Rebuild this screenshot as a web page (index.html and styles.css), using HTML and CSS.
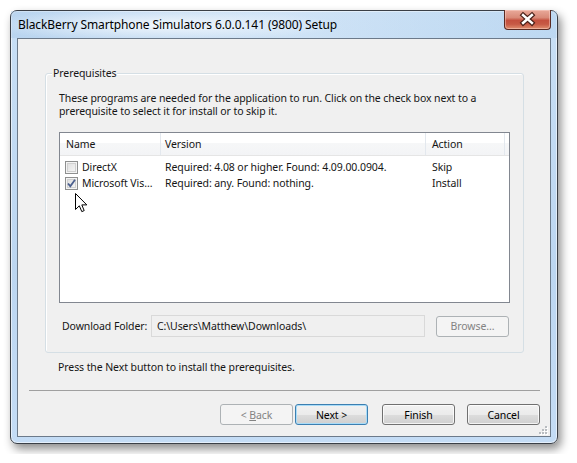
FILE: index.html
```html
<!DOCTYPE html>
<html>
<head>
<meta charset="utf-8">
<link rel="stylesheet" href="styles.css">
</head>
<body>
<div class="window">
  <div class="titlebar">
    <span class="title">BlackBerry Smartphone Simulators 6.0.0.141 (9800) Setup</span>
    <div class="close">
      <svg width="46" height="19" viewBox="0 0 46 19">
        <path d="M18.5 5 L27.5 13 M27.5 5 L18.5 13" stroke="#4a2018" stroke-width="5" stroke-linecap="square" fill="none"/>
        <path d="M18.5 5 L27.5 13 M27.5 5 L18.5 13" stroke="#ffffff" stroke-width="2.6" stroke-linecap="square" fill="none"/>
      </svg>
    </div>
  </div>
  <div class="client">
    <div class="group">
      <span class="group-label">Prerequisites</span>
      <p class="desc">These programs are needed for the application to run. Click on the check box next to a<br>prerequisite to select it for install or to skip it.</p>
      <div class="list">
        <div class="list-head">
          <div class="hcol c-name">Name</div>
          <div class="hcol c-version">Version</div>
          <div class="hcol c-action">Action</div>
          <div class="hcol c-fill"></div>
        </div>
        <div class="rows">
          <div class="row">
            <div class="cell c-name"><span class="check"></span><span>DirectX</span></div>
            <div class="cell c-version">Required: 4.08 or higher. Found: 4.09.00.0904.</div>
            <div class="cell c-action">Skip</div>
          </div>
          <div class="row">
            <div class="cell c-name"><span class="check checked"><svg width="11" height="11" viewBox="0 0 11 11"><path d="M2 5.5 L4.3 8.2 L9 1.8" stroke="#4b5f8e" stroke-width="1.8" fill="none"/></svg></span><span>Microsoft Vis…</span></div>
            <div class="cell c-version">Required: any. Found: nothing.</div>
            <div class="cell c-action">Install</div>
          </div>
        </div>
        <svg class="cursor" width="13" height="20" viewBox="0 0 13 20">
          <path d="M0.5 0.5 L0.5 16.5 L4.3 12.8 L6.8 18.6 L9.2 17.6 L6.8 11.9 L11.8 11.9 Z" fill="#fff" stroke="#000" stroke-width="1" stroke-linejoin="miter"/>
        </svg>
      </div>
      <div class="folder-row">
        <span class="folder-label">Download Folder:</span>
        <div class="field">C:\Users\Matthew\Downloads\</div>
        <button class="btn" disabled>Browse...</button>
      </div>
    </div>
    <p class="note">Press the Next button to install the prerequisites.</p>
    <div class="sep"></div>
    <div class="buttons">
      <button class="btn" disabled>&lt; <u>B</u>ack</button>
      <button class="btn default">Next &gt;</button>
      <button class="btn finish">Finish</button>
      <button class="btn cancel">Cancel</button>
    </div>
    <svg class="grip" width="9" height="9" viewBox="0 0 9 9">
      <g fill="#fff">
        <rect x="7" y="1" width="2" height="2"/><rect x="4" y="4" width="2" height="2"/><rect x="7" y="4" width="2" height="2"/>
        <rect x="1" y="7" width="2" height="2"/><rect x="4" y="7" width="2" height="2"/><rect x="7" y="7" width="2" height="2"/>
      </g>
      <g fill="#b8bcc0">
        <rect x="6" y="0" width="2" height="2"/><rect x="3" y="3" width="2" height="2"/><rect x="6" y="3" width="2" height="2"/>
        <rect x="0" y="6" width="2" height="2"/><rect x="3" y="6" width="2" height="2"/><rect x="6" y="6" width="2" height="2"/>
      </g>
    </svg>
  </div>
</div>
</body>
</html>
```
FILE: styles.css
```css
* { box-sizing: border-box; }
html, body { margin: 0; padding: 0; background: #ffffff; }
body {
  padding: 10px;
  font-family: "Noto Sans", "Open Sans", sans-serif;
  font-size: 10.5px;
  letter-spacing: -0.09px;
  color: #151515;
}
.window {
  width: 548px;
  height: 434px;
  border: 1px solid #3a3f46;
  border-radius: 7px;
  padding: 0 6px 6px 6px;
  background: linear-gradient(180deg, #c8dff5 0%, #bcd6f1 60%, #c4dcf5 100%);
  box-shadow: 3px 5px 10px rgba(0,0,0,0.45), inset 0 0 0 1px rgba(255,255,255,0.55);
  display: flex;
  flex-direction: column;
}
.titlebar {
  height: 27px;
  display: flex;
  align-items: center;
  background:
    radial-gradient(ellipse 180px 16px at 150px 14px, rgba(255,255,255,0.75), rgba(255,255,255,0) 100%),
    linear-gradient(90deg, rgba(160,195,230,0.35), rgba(255,255,255,0.15) 50%, rgba(170,205,235,0.35));
  margin: 0 -6px;
  padding: 0 6px 0 7px;
}
.title {
  font-size: 12px;
  color: #000;
  letter-spacing: -0.1px;
  white-space: nowrap;
}
.close {
  margin-left: auto;
  align-self: flex-start;
  width: 47px;
  height: 20px;
  margin-top: -1px;
  border: 1px solid #5a2a22;
  border-top: none;
  border-radius: 0 0 4px 4px;
  background: linear-gradient(180deg, #e9a99a 0%, #d98a78 40%, #c4503e 55%, #c75a45 75%, #e08f6f 100%);
  box-shadow: inset 0 0 0 1px rgba(255,220,210,0.45);
  display: flex;
  align-items: center;
  justify-content: center;
}
.close svg { display: block; }
.client {
  flex: 1;
  position: relative;
  border: 1px solid #6c7a8a;
  background: #f0f0f0;
  display: flex;
  flex-direction: column;
}
.group {
  position: relative;
  margin: 34px 0 0 27px;
  width: 479px;
  height: 280px;
  border: 1px solid #d5dfe5;
  border-radius: 3px;
  box-shadow: inset 1px 1px 0 #fff;
  padding: 18px 13px 15px 13px;
  display: flex;
  flex-direction: column;
}
.group-label {
  position: absolute;
  left: 6px;
  top: -8px;
  padding: 0 1px;
  background: #f0f0f0;
  line-height: 14px;
}
.desc {
  margin: 0;
  line-height: 13px;
  height: 26px;
  white-space: nowrap;
}
.list {
  position: relative;
  margin-top: 14px;
  height: 171px;
  border: 1px solid #828790;
  background: #fff;
}
.list-head {
  display: flex;
  height: 23px;
  border-bottom: 1px solid #e5e5e5;
  background: linear-gradient(180deg, #ffffff 0%, #ffffff 45%, #f6f7f8 46%, #f3f4f6 100%);
}
.hcol {
  display: flex;
  align-items: center;
  height: 22px;
}
.hcol.c-name { width: 100px; padding-left: 6px; }
.hcol.c-version { width: 265px; padding-left: 4px; border-left: 1px solid #e3e8ee; }
.hcol.c-action { width: 80px; padding-left: 6px; border-left: 1px solid #e3e8ee; border-right: 1px solid #e3e8ee; }
.hcol.c-fill { flex: 1; }
.rows { padding-top: 3px; }
.row {
  display: flex;
  height: 16px;
  align-items: center;
}
.cell { white-space: nowrap; }
.cell.c-name { width: 100px; padding-left: 5px; display: flex; align-items: center; gap: 4px; }
.cell.c-version { width: 265px; padding-left: 5px; }
.cell.c-action { width: 80px; padding-left: 7px; }
.check {
  width: 13px;
  height: 13px;
  border: 1px solid #8e8f8f;
  background: linear-gradient(135deg, #dcdcdc, #f8f8f8);
  box-shadow: inset 0 0 0 1px #f4f4f4, inset 0 0 0 2px #d0d0d0;
  display: flex;
  align-items: center;
  justify-content: center;
}
.check svg { display: block; }
.cursor {
  position: absolute;
  left: 15px;
  top: 60px;
}
.folder-row {
  margin-top: 12px;
  height: 22px;
  display: flex;
  align-items: center;
  padding-right: 1px;
}
.folder-label {
  width: 92px;
  padding-left: 3px;
}
.field {
  width: 274px;
  height: 22px;
  border: 1px solid #d9d9d9;
  background: #f0f0f0;
  padding-left: 5px;
  display: flex;
  align-items: center;
  white-space: nowrap;
}
.folder-row .btn { margin-left: auto; }
.btn {
  width: 73px;
  height: 21px;
  border: 1px solid #707070;
  border-radius: 3px;
  background: linear-gradient(180deg, #f2f2f2 0%, #ebebeb 50%, #dddddd 51%, #cfcfcf 100%);
  box-shadow: inset 0 0 0 1px rgba(255,255,255,0.75);
  font-family: inherit;
  font-size: 10.5px;
  letter-spacing: -0.09px;
  color: #000;
  padding: 0;
}
.btn:disabled {
  border-color: #adb2b5;
  background: #f4f4f4;
  color: #838383;
  box-shadow: none;
}
.btn.default {
  border-color: #3c7fb1;
  box-shadow: inset 0 0 0 1px #a9dcf8;
}
.note {
  margin: 8px 0 0 40px;
  line-height: 13px;
}
.sep {
  margin: 16px 10px 0 11px;
  height: 1px;
  background: #a0a0a0;
}
.buttons {
  margin-top: 13px;
  padding-right: 10px;
  display: flex;
  justify-content: flex-end;
}
.buttons .default { margin-left: 2px; }
.buttons .finish { margin-left: 14px; }
.buttons .cancel { margin-left: 12px; }
.grip {
  position: absolute;
  right: 2px;
  bottom: 1px;
}
```
